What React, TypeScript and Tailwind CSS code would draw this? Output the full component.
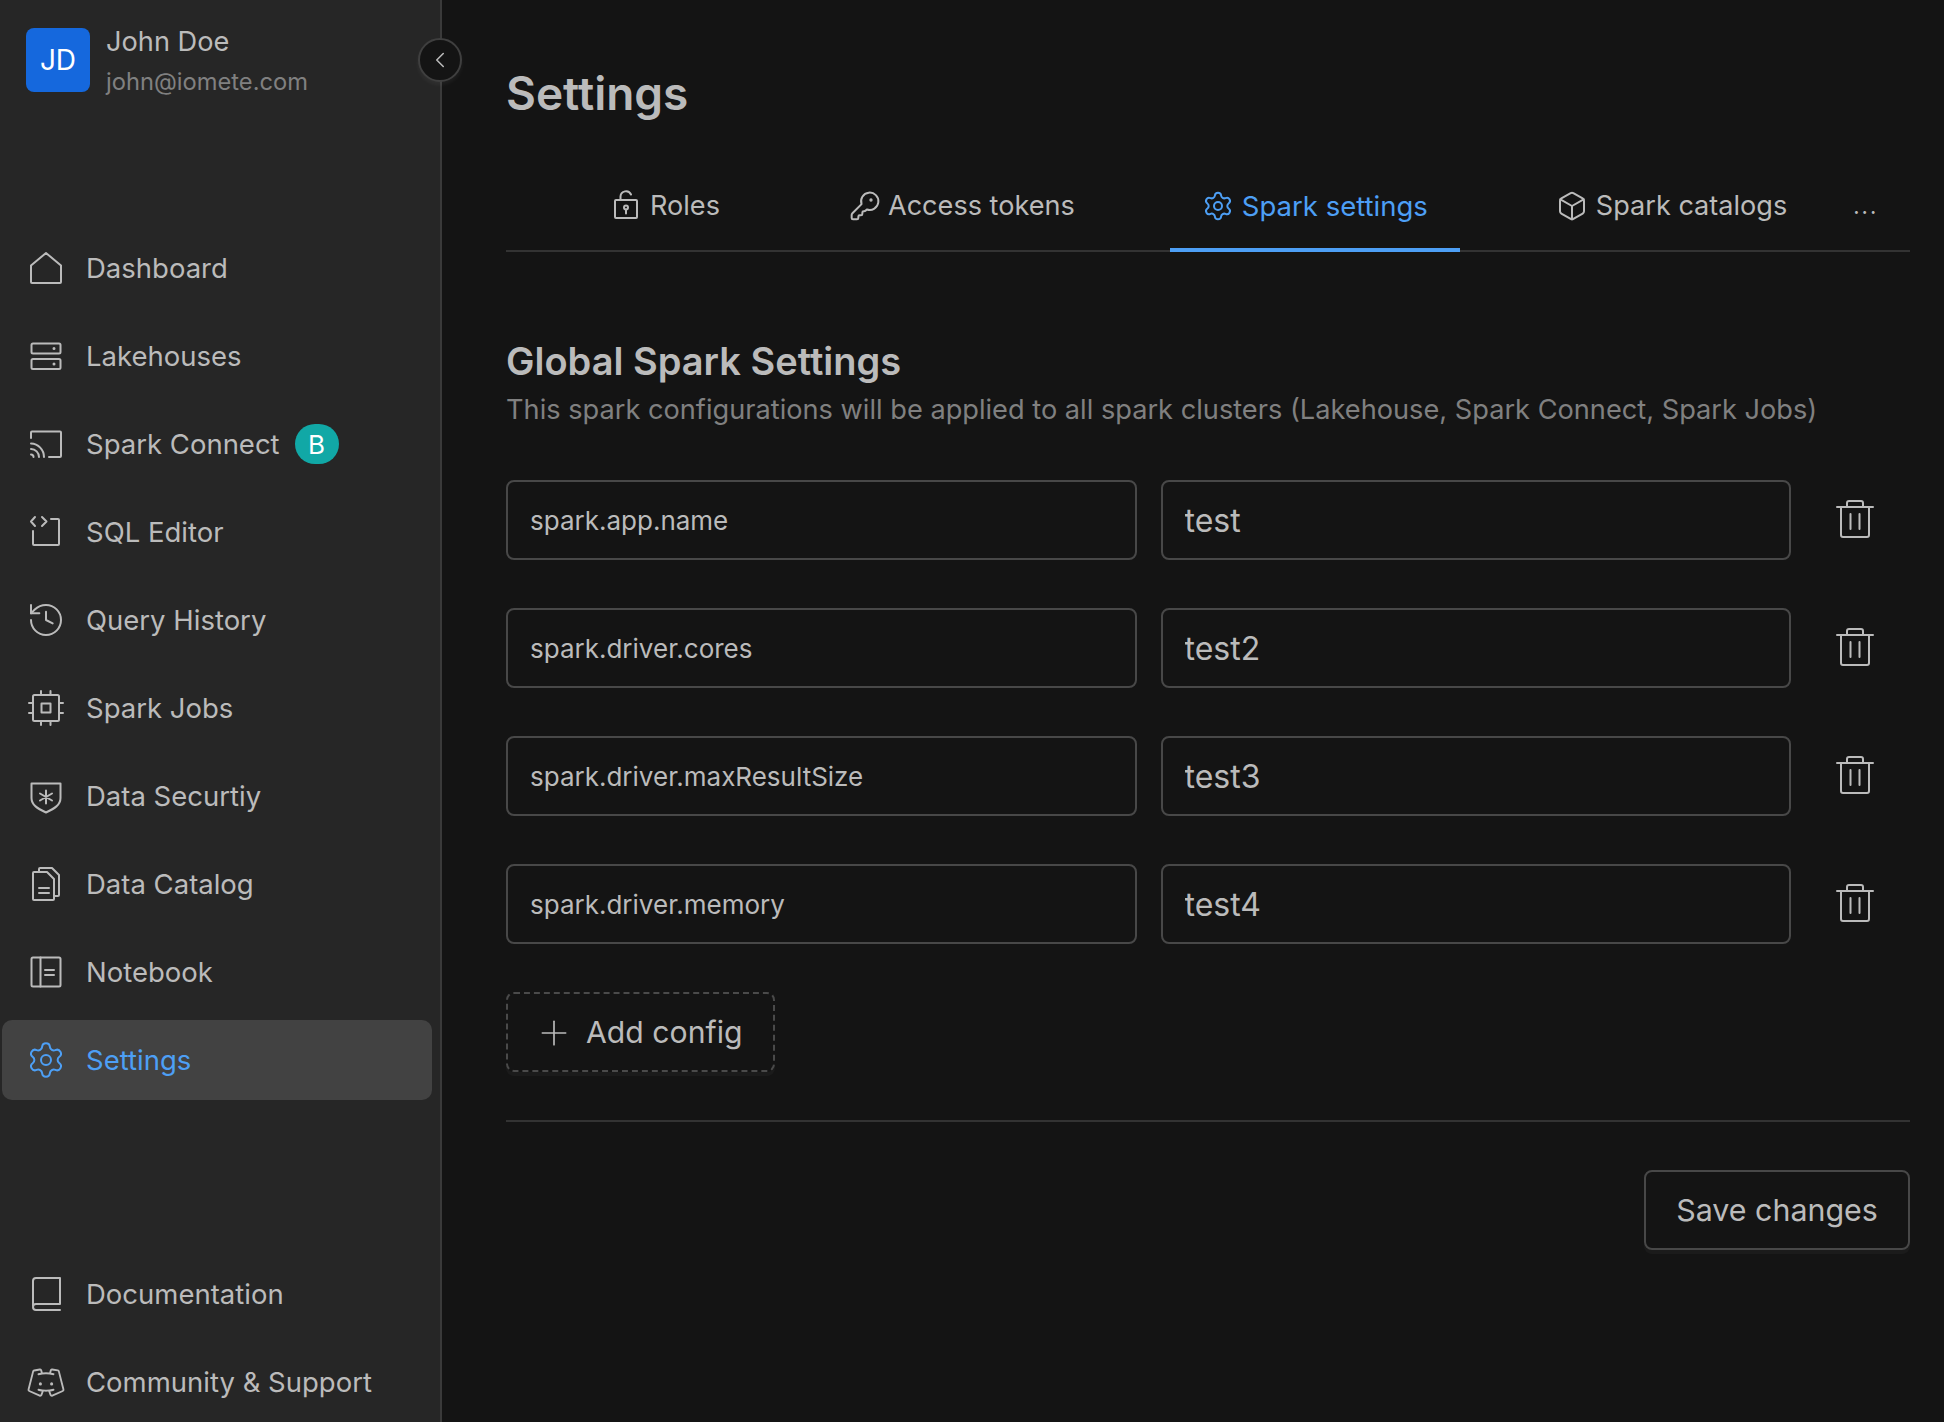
import type { ReactNode } from "react";
import { Box, ChevronLeft, History, KeyRound, Plus, Settings } from "lucide-react";
import { PiDiscordLogoLight } from "react-icons/pi";

function Svg({ size = 40, children }: { size?: number; children: ReactNode }) {
  return (
    <svg
      width={size}
      height={size}
      viewBox={`0 0 ${size} ${size}`}
      fill="none"
      stroke="currentColor"
      strokeWidth="2"
      strokeLinecap="round"
      strokeLinejoin="round"
      className="shrink-0"
    >
      {children}
    </svg>
  );
}

const HomeIcon = () => (
  <Svg>
    <path d="M6 35h28a1 1 0 0 0 1-1V17.500L20 5 5 17.500V34a1 1 0 0 0 1 1Z" />
  </Svg>
);

const ServerIcon = () => (
  <Svg>
    <rect x="5.500" y="7.500" width="29" height="10" rx="1.500" />
    <rect x="5.500" y="23" width="29" height="10" rx="1.500" />
    <path d="M28 12.500h.01M28 28h.01" strokeWidth="3" />
  </Svg>
);

const CastIcon = () => (
  <Svg>
    <path d="M5 14V8.500a1 1 0 0 1 1-1h28a1 1 0 0 1 1 1V32a1 1 0 0 1-1 1H23" />
    <path d="M5 19.500A13.500 13.500 0 0 1 18 33M5 25a8 8 0 0 1 8 8M5 30.500a2.500 2.500 0 0 1 2.500 2.500" />
  </Svg>
);

const CodeBoxIcon = () => (
  <Svg>
    <path d="M7 19v13a1 1 0 0 0 1 1h24a1 1 0 0 0 1-1V8a1 1 0 0 0-1-1h-7" />
    <path d="M9 5 5 9.500 9 14M16 5l4.500 4.500L16 14" />
  </Svg>
);

const ChipIcon = () => (
  <Svg>
    <rect x="7" y="7" width="26" height="26" rx="1.500" />
    <rect x="15.500" y="15.500" width="9" height="9" />
    <path d="M15 3v4M24.500 3v4M15 33v4M24.500 33v4M3 15h4M3 25h4M33 15h4M33 25h4" />
  </Svg>
);

const ShieldIcon = () => (
  <Svg>
    <path d="M5.500 7.500h29V22c0 7-6 10.500-14.500 14.500C11.500 32.500 5.500 29 5.500 22Z" />
    <path d="M20 14.500v13M14 17.500l12 7M26 17.500l-12 7" />
  </Svg>
);

const FilesIcon = () => (
  <Svg>
    <path d="M8 8h13l7 7v20a1 1 0 0 1-1 1H8a1 1 0 0 1-1-1V9a1 1 0 0 1 1-1Z" />
    <path d="M13 7V5a1 1 0 0 1 1-1h12l7 7v20a1 1 0 0 1-1 1h-4" />
    <path d="M13 24h10M13 29h10" />
  </Svg>
);

const NotebookIcon = () => (
  <Svg>
    <rect x="5.500" y="5.500" width="29" height="29" rx="1.500" />
    <path d="M14.500 5.500v29M19 18h9M19 23h9" />
  </Svg>
);

const BookIcon = () => (
  <Svg>
    <path d="M7 32V7a3 3 0 0 1 3-3h24v26H10a3 3 0 0 0-3 3 3 3 0 0 0 3 3h24" />
  </Svg>
);

const LockIcon = () => (
  <Svg size={32}>
    <rect x="5" y="10" width="22" height="18" rx="1" />
    <path d="M10.500 10V6.500a5.500 5.500 0 0 1 10.500-2" />
    <circle cx="16" cy="17.500" r="2" />
    <path d="M16 19.500v4" />
  </Svg>
);

const TrashIcon = () => (
  <Svg>
    <path d="M2 8h36" />
    <path d="M6 8v28a2 2 0 0 0 2 2h24a2 2 0 0 0 2-2V8" />
    <path d="M12 8V4a2 2 0 0 1 2-2h12a2 2 0 0 1 2 2v4" />
    <path d="M15.500 15v15M24.500 15v15" />
  </Svg>
);

const mainNav = [
  { label: "Dashboard", icon: <HomeIcon /> },
  { label: "Lakehouses", icon: <ServerIcon /> },
  { label: "Spark Connect", icon: <CastIcon />, badge: "B" },
  { label: "SQL Editor", icon: <CodeBoxIcon /> },
  { label: "Query History", icon: <History size={40} strokeWidth={1.2} /> },
  { label: "Spark Jobs", icon: <ChipIcon /> },
  { label: "Data Securtiy", icon: <ShieldIcon /> },
  { label: "Data Catalog", icon: <FilesIcon /> },
  { label: "Notebook", icon: <NotebookIcon /> },
  { label: "Settings", icon: <Settings size={40} strokeWidth={1.2} />, active: true },
];

const bottomNav = [
  { label: "Documentation", icon: <BookIcon /> },
  { label: "Community & Support", icon: <PiDiscordLogoLight size={40} /> },
];

const configs = [
  { key: "spark.app.name", value: "test" },
  { key: "spark.driver.cores", value: "test2" },
  { key: "spark.driver.maxResultSize", value: "test3" },
  { key: "spark.driver.memory", value: "test4" },
];

type NavRow = { label: string; icon: ReactNode; badge?: string; active?: boolean };

function NavItem({ item }: { item: NavRow }) {
  return (
    <a
      className={`flex h-20 items-center gap-5 rounded-[10px] pl-6 text-[27.5px] ${
        item.active ? "bg-[#424242] text-[#4d9ff5]" : "text-[#bbbbbb]"
      }`}
    >
      {item.icon}
      <span className="pt-[1px]">{item.label}</span>
      {item.badge && (
        <span className="-ml-[5px] flex h-10 w-11 items-center justify-center rounded-full bg-[#11a8a6] text-[26px] text-white">
          {item.badge}
        </span>
      )}
    </a>
  );
}

export default function App() {
  return (
    <div className="flex h-[1422px] overflow-hidden bg-[#141414] font-['Inter',sans-serif]">
      <aside className="relative flex w-[442px] shrink-0 flex-col border-r-2 border-[#3a3a3a] bg-[#262626] pl-[2px] pr-[8px]">
        <div className="flex items-start gap-4 pl-6 pt-[22px]">
          <div className="mt-[6px] flex h-16 w-16 items-center justify-center rounded-lg bg-[#1568dd] text-[28px] text-white">
            JD
          </div>
          <div>
            <div className="pt-[1px] text-[27.2px] leading-[38px] text-[#bbbbbb]">John Doe</div>
            <div className="mt-[3px] text-[23.7px] leading-[36px] text-[#808080]">john@iomete.com</div>
          </div>
        </div>

        <button className="absolute left-[418px] top-[38px] flex h-11 w-11 items-center justify-center rounded-full border-2 border-[#3f3f3f] bg-[#141414] text-[#bbbbbb] shadow-[0_3px_4px_rgba(255,255,255,0.05)]">
          <ChevronLeft size={26} strokeWidth={1.4} />
        </button>

        <nav className="mt-[128px] flex flex-col gap-2">
          {mainNav.map((item) => (
            <NavItem key={item.label} item={item} />
          ))}
        </nav>

        <nav className="mt-auto flex flex-col gap-2">
          {bottomNav.map((item) => (
            <NavItem key={item.label} item={item} />
          ))}
        </nav>
      </aside>

      <main className="min-w-0 flex-1 pl-16 pr-[34px] pt-[63px]">
        <h1 className="text-[46px] font-semibold leading-[60px] text-[#bbbbbb]">Settings</h1>

        <div className="mt-[37px] flex h-[92px] items-stretch gap-[66px] border-b-2 border-[#333333] pl-[76px] text-[27.1px] text-[#bbbbbb]">
          <div className="flex items-center gap-2 pl-7 pr-[31px] pt-[2px]">
            <LockIcon />
            <span className="pt-[1px]">Roles</span>
          </div>
          <div className="flex items-center gap-[7px] px-8 pt-[2px]">
            <KeyRound size={32} strokeWidth={1.5} />
            <span className="pt-[1px]">Access tokens</span>
          </div>
          <div className="relative -ml-[3px] flex items-center gap-2 px-8 pt-[2px] text-[27.5px] text-[#4d9ff5]">
            <Settings size={32} strokeWidth={1.5} />
            <span className="pt-[1px]">Spark settings</span>
            <div className="absolute inset-x-0 -bottom-[2px] h-1 bg-[#4d9ff5]" />
          </div>
          <div className="-ml-[2px] flex items-center gap-2 px-8 pt-[2px]">
            <Box size={32} strokeWidth={1.5} />
            <span className="pt-[1px]">Spark catalogs</span>
          </div>
          <div className="-ml-[32px] flex items-center pt-[2px] text-[22px] tracking-[2px]">...</div>
        </div>

        <h2 className="mt-[85px] text-[38px] font-semibold leading-[48px] text-[#bbbbbb]">Global Spark Settings</h2>
        <p className="mt-[5px] text-[27.2px] leading-10 text-[#808080]">
          This spark configurations will be applied to all spark clusters (Lakehouse, Spark Connect, Spark Jobs)
        </p>

        <div className="mt-[50px] flex flex-col gap-12">
          {configs.map((config) => (
            <div key={config.key} className="flex items-center gap-6">
              <input
                readOnly
                value={config.key}
                className="h-20 min-w-0 flex-1 rounded-lg border-2 border-[#484848] bg-transparent px-[22px] text-[26px] text-[#bbbbbb] outline-none"
              />
              <input
                readOnly
                value={config.value}
                className="h-20 min-w-0 flex-1 rounded-lg border-2 border-[#484848] bg-transparent px-[22px] text-[32px] text-[#bbbbbb] outline-none"
              />
              <button className="ml-5 mr-[35px] -mt-[2px] text-[#bbbbbb]">
                <TrashIcon />
              </button>
            </div>
          ))}
        </div>

        <button className="mt-12 flex h-20 w-[269px] items-center gap-3 rounded-lg border-2 border-dashed border-[#4a4a4a] pl-[26px] pt-[1px] text-[30.2px] text-[#bbbbbb] shadow-[0_4px_0_rgba(255,255,255,0.03)]">
          <Plus size={40} strokeWidth={1} />
          <span>Add config</span>
        </button>

        <div className="mt-12 h-[2px] bg-[#333333]" />

        <div className="mt-12 flex justify-end">
          <button className="h-20 w-[266px] rounded-lg border-2 border-[#484848] pt-[1px] text-[30.4px] text-[#bbbbbb] shadow-[0_4px_0_rgba(255,255,255,0.03)]">
            Save changes
          </button>
        </div>
      </main>
    </div>
  );
}
